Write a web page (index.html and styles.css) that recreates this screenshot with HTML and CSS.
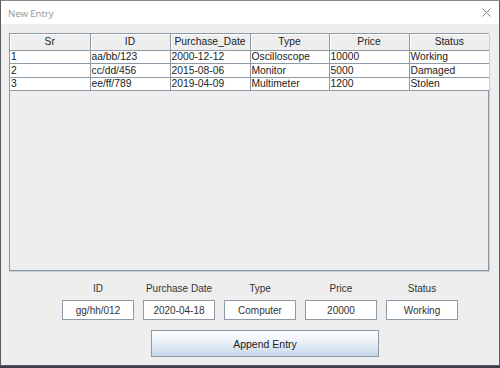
FILE: index.html
```html
<!DOCTYPE html>
<html lang="en">

<head>
  <meta charset="UTF-8">
  <title>New Entry</title>
  <link rel="stylesheet" href="styles.css">
</head>

<body>
  <div class="window">
    <div class="titlebar">
      <span class="title">New Entry</span>
      <svg class="close" width="9" height="9" viewBox="0 0 9 9">
        <path d="M0.5 0.5 L8.5 8.5 M8.5 0.5 L0.5 8.5" stroke="#808080" stroke-width="1" fill="none" />
      </svg>
    </div>

    <div class="content">
      <div class="scroll">
        <table class="grid">
          <thead>
            <tr>
              <th>Sr</th>
              <th>ID</th>
              <th>Purchase_Date</th>
              <th class="narrow">Type</th>
              <th>Price</th>
              <th>Status</th>
            </tr>
          </thead>
          <tbody>
            <tr>
              <td>1</td>
              <td>aa/bb/123</td>
              <td>2000-12-12</td>
              <td>Oscilloscope</td>
              <td>10000</td>
              <td>Working</td>
            </tr>
            <tr class="mid">
              <td>2</td>
              <td>cc/dd/456</td>
              <td>2015-08-06</td>
              <td>Monitor</td>
              <td>5000</td>
              <td>Damaged</td>
            </tr>
            <tr>
              <td>3</td>
              <td>ee/ff/789</td>
              <td>2019-04-09</td>
              <td>Multimeter</td>
              <td>1200</td>
              <td>Stolen</td>
            </tr>
          </tbody>
        </table>
      </div>

      <div class="form">
        <label>ID</label>
        <label>Purchase Date</label>
        <label>Type</label>
        <label>Price</label>
        <label>Status</label>
        <input type="text" class="field" value="gg/hh/012">
        <input type="text" class="field" value="2020-04-18">
        <input type="text" class="field" value="Computer">
        <input type="text" class="field" value="20000">
        <input type="text" class="field" value="Working">
      </div>

      <button class="append">Append Entry</button>
    </div>
  </div>
</body>

</html>
```

FILE: styles.css
```css
* {
  margin: 0;
  padding: 0;
  box-sizing: border-box;
}

html,
body {
  width: 100%;
  height: 100%;
}

body {
  background: #3b4048;
  font-family: "Liberation Sans", Arial, sans-serif;
}

.window {
  width: 500px;
  height: 366px;
  border: 1px solid #5c5c5c;
  border-top-color: #8a8a8a;
  display: flex;
  flex-direction: column;
  background: #eeeeee;
  overflow: hidden;
}

.titlebar {
  flex-shrink: 0;
  height: 23px;
  background: #fff;
  display: flex;
  align-items: center;
  justify-content: space-between;
  padding: 0 8px 0 7px;
}

.title {
  font-family: "Noto Sans", sans-serif;
  font-size: 9.5px;
  color: #9a9a9a;
  margin-top: 2px;
}

.close {
  display: block;
}

.content {
  flex: 1;
  padding: 9px 0 0 8px;
}

.scroll {
  width: 480px;
  height: 238px;
  border: 1px solid #8b97a2;
  box-shadow: 1px 1px 0 #c4cfd9;
  background: #eeeeee;
}

.grid {
  border-collapse: collapse;
  table-layout: fixed;
  width: 478px;
  font-size: 10.3px;
  color: #222;
}

.grid thead tr {
  height: 16px;
}

.grid tbody tr {
  height: 13px;
}

.grid tbody tr.mid {
  height: 14px;
}

.grid th {
  width: 80px;
  font-weight: normal;
  background: #eeeeee;
  border-right: 1px solid #8e9aa5;
  border-bottom: 1px solid #8e9aa5;
  box-shadow: inset 1px 1px 0 #fff;
  padding: 0;
  line-height: 12px;
}

.grid th.narrow {
  width: 79px;
}

.grid td {
  background: #fff;
  border-right: 1px solid #8e9aa5;
  border-bottom: 1px solid #8e9aa5;
  padding: 0 0 0 1px;
  line-height: 11px;
  white-space: nowrap;
  overflow: hidden;
}

.grid th:last-child,
.grid td:last-child {
  border-right: none;
}

.form {
  display: grid;
  grid-template-columns: repeat(5, 72px);
  column-gap: 9px;
  row-gap: 5px;
  margin: 12px 0 0 53px;
}

.form label {
  text-align: center;
  font-size: 10px;
  color: #333;
  line-height: 12px;
  white-space: nowrap;
}

.field {
  width: 72px;
  height: 20px;
  border: 1px solid #8e9aa5;
  background: #fff;
  text-align: center;
  font-family: "Liberation Sans", Arial, sans-serif;
  font-size: 10px;
  color: #333;
  outline: none;
}

.append {
  display: block;
  width: 228px;
  height: 27px;
  margin: 10px 0 0 142px;
  border: 1px solid #8b98a6;
  background: linear-gradient(#ffffff, #f0f5fa 35%, #c6d7e8);
  font-family: "Liberation Sans", Arial, sans-serif;
  font-size: 10.5px;
  color: #222;
}
```
